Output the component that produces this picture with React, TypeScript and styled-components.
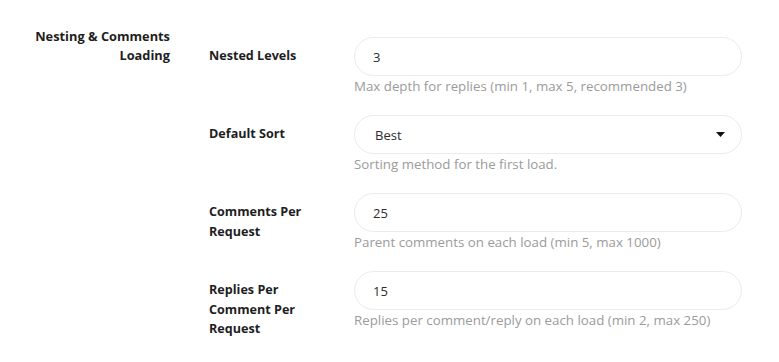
import React from "react";
import styled, { createGlobalStyle } from "styled-components";

const Global = createGlobalStyle`
  html, body { margin: 0; padding: 0; background: #ffffff; }
  body { font-family: "Open Sans", "Lato", sans-serif; color: #1e1e1e; }
`;

const Page = styled.div`
  width: 779px;
  height: 362px;
  box-sizing: border-box;
  padding-top: 27px;
  display: grid;
  grid-template-columns: 170px 1fr;
  column-gap: 39px;
  overflow: hidden;
`;

const SectionLabel = styled.div`
  font-size: 12.8px;
  font-weight: 700;
  line-height: 19px;
  text-align: right;
  padding-left: 24px;
`;

const Fields = styled.div`
  display: flex;
  flex-direction: column;
  gap: 21px;
  padding-top: 10px;
`;

const FieldRow = styled.div`
  display: grid;
  grid-template-columns: 145px 388px;
`;

const FieldLabel = styled.div`
  font-size: 12.6px;
  font-weight: 700;
  line-height: 19.5px;
  padding-top: 9px;
  padding-right: 22px;
`;

const Control = styled.div`
  display: flex;
  flex-direction: column;
`;

const Box = styled.div`
  height: 39px;
  box-sizing: border-box;
  border: 1px solid #ebebeb;
  border-radius: 20px;
  display: flex;
  align-items: center;
  padding: 0 18px;
  font-size: 13px;
  color: #2c2c2c;
`;

const SelectBox = styled(Box)`
  padding-left: 20px;
  justify-content: space-between;
  padding-right: 16px;
`;

const Help = styled.div`
  margin-top: 2px;
  font-size: 13.3px;
  line-height: 16px;
  color: #9b9b9b;
`;

const Caret = () => (
  <svg width="9" height="5" viewBox="0 0 9 5">
    <path d="M0 0 L9 0 L4.5 5 Z" fill="#111" />
  </svg>
);

const fields: { label: string; value: string; help: string; select?: boolean }[] = [
  { label: "Nested Levels", value: "3", help: "Max depth for replies (min 1, max 5, recommended 3)" },
  { label: "Default Sort", value: "Best", help: "Sorting method for the first load.", select: true },
  { label: "Comments Per Request", value: "25", help: "Parent comments on each load (min 5, max 1000)" },
  { label: "Replies Per Comment Per Request", value: "15", help: "Replies per comment/reply on each load (min 2, max 250)" },
];

export default function App() {
  return (
    <>
      <Global />
      <Page>
        <SectionLabel>Nesting &amp; Comments Loading</SectionLabel>
        <Fields>
          {fields.map((f) => (
            <FieldRow key={f.label}>
              <FieldLabel>{f.label}</FieldLabel>
              <Control>
                {f.select ? (
                  <SelectBox>
                    <span>{f.value}</span>
                    <Caret />
                  </SelectBox>
                ) : (
                  <Box>{f.value}</Box>
                )}
                <Help>{f.help}</Help>
              </Control>
            </FieldRow>
          ))}
        </Fields>
      </Page>
    </>
  );
}
